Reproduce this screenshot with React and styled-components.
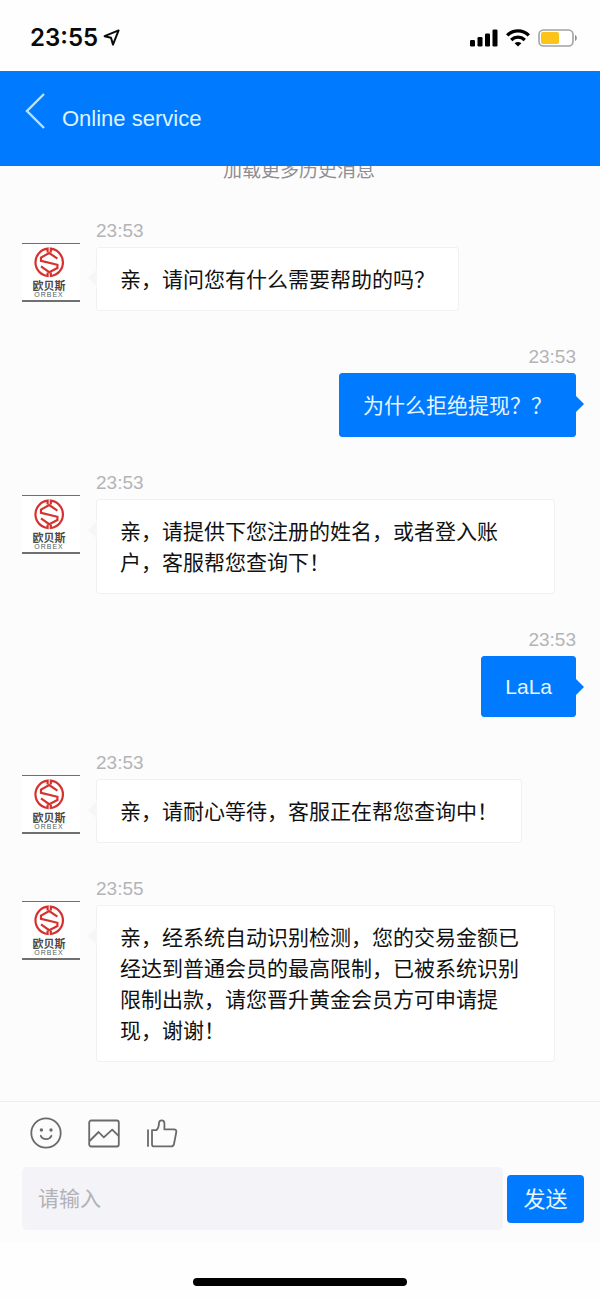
import React, { useState } from "react";
import styled, { createGlobalStyle } from "styled-components";

const GlobalStyle = createGlobalStyle`
  * {
    box-sizing: border-box;
  }
  body {
    margin: 0;
    background-color: #fefefe;
    font-family: "Liberation Sans", "Noto Sans CJK SC", sans-serif;
  }
`;

const Page = styled.div`
  display: flex;
  flex-direction: column;
  min-height: 100vh;
`;

const StatusBar = styled.div`
  display: flex;
  align-items: center;
  height: 71px;
  padding: 4px 22px 0 30px;
`;

const Clock = styled.span`
  font-family: Inter, "Liberation Sans", sans-serif;
  font-size: 24px;
  font-weight: 600;
  color: #0a0a0a;
  margin-right: 5px;
`;

const StatusIcons = styled.div`
  display: flex;
  align-items: center;
  gap: 8px;
  margin-left: auto;
`;

const Header = styled.header`
  display: flex;
  align-items: center;
  height: 95px;
  padding: 0 24px;
  gap: 16px;
  background-color: #007bff;
`;

const BackButton = styled.button`
  display: flex;
  padding: 0 0 16px;
  border: 0;
  background: none;
  cursor: pointer;
`;

const Title = styled.h1`
  margin: 0;
  font-size: 22px;
  font-weight: normal;
  line-height: 28px;
  color: #dff3ff;
`;

const Chat = styled.main`
  flex: 1;
  display: flex;
  flex-direction: column;
  gap: 34px;
  padding: 0 24px 39px 22px;
  overflow: hidden;
  background-color: #fcfcfd;
`;

// 往上滚动后只露出下半部分
const LoadMore = styled.button`
  align-self: center;
  margin: -7px 0 2px;
  padding: 0;
  border: 0;
  background: none;
  font-family: inherit;
  font-size: 19px;
  line-height: 24px;
  color: #8e8e93;
  cursor: pointer;
`;

const Row = styled.div`
  display: flex;
  align-items: flex-start;
  justify-content: ${(props) => (props.$mine ? "flex-end" : "flex-start")};
  gap: 16px;
  padding-right: ${(props) => (props.$mine ? "0" : "21px")};
`;

const Avatar = styled.div`
  flex: none;
  width: 58px;
  height: 59px;
  margin-top: 24px;
  border-top: 1px solid #707070;
  border-bottom: 2px solid #707070;
  background-color: #ffffff;
`;

const Body = styled.div`
  display: flex;
  flex-direction: column;
  align-items: ${(props) => (props.$mine ? "flex-end" : "flex-start")};
  gap: 4px;
  min-width: 0;
`;

const Time = styled.time`
  font-size: 19px;
  line-height: 24px;
  color: #b4b4b6;
`;

const Bubble = styled.div`
  position: relative;
  padding: 16px 23px 15px;
  border: 1px solid ${(props) => (props.$mine ? "#007bff" : "#f1f1f3")};
  border-radius: 3px;
  background-color: ${(props) => (props.$mine ? "#007bff" : "#ffffff")};
  color: ${(props) => (props.$mine ? "#e6f5ff" : "#111111")};
  font-size: 21px;
  line-height: ${(props) => (props.$latin ? "28px" : "31px")};

  &::after {
    content: "";
    position: absolute;
    top: 21px;
    border: 9px solid transparent;
    ${(props) =>
      props.$mine
        ? "left: 100%; border-left-color: #007bff; border-right: 0;"
        : "right: 100%; border-right-color: #f6f6f8; border-left: 0;"}
  }
`;

const Footer = styled.footer`
  padding: 15px 16px 13px 22px;
  border-top: 1px solid #ededef;
  background-color: #fcfcfd;
`;

const Tools = styled.div`
  display: flex;
  gap: 26px;
  padding: 0 8px;
  margin-bottom: 18px;
`;

const ToolButton = styled.button`
  display: flex;
  padding: 0;
  border: 0;
  background: none;
  cursor: pointer;
`;

const SendForm = styled.form`
  display: flex;
  align-items: center;
  gap: 4px;
`;

const TextInput = styled.input`
  flex: 1;
  min-width: 0;
  height: 63px;
  padding: 0 16px;
  border: 0;
  border-radius: 5px;
  background-color: #f3f3f8;
  font-family: inherit;
  font-size: 21px;
  color: #111111;
  outline: none;
  &::placeholder {
    color: #b2b2b6;
    opacity: 1;
  }
`;

const SendButton = styled.button`
  width: 77px;
  height: 48px;
  padding: 0 0 4px;
  border: 0;
  border-radius: 4px;
  background-color: #007bff;
  color: #e6f5ff;
  font-family: inherit;
  font-size: 22px;
  cursor: pointer;
`;

const HomeArea = styled.div`
  display: flex;
  justify-content: center;
  align-items: flex-end;
  height: 57px;
  padding-bottom: 14px;
`;

const HomeBar = styled.div`
  width: 214px;
  height: 8px;
  border-radius: 4px;
  background-color: #000000;
`;

const LocationIcon = () => (
  <svg width="18" height="18" viewBox="0 0 18 18" fill="none" stroke="#0a0a0a" strokeWidth="2" strokeLinejoin="round">
    <path d="M15.6 1.4 L1.6 7.2 L8 8.8 L10 15.6 Z" />
  </svg>
);

const SignalIcon = () => (
  <svg width="28" height="18" viewBox="0 0 28 18">
    <rect x="0" y="11" width="5" height="6.5" rx="1.3" />
    <rect x="7.5" y="8" width="5" height="9.5" rx="1.3" />
    <rect x="15" y="4.5" width="5" height="13" rx="1.3" />
    <rect x="22.5" y="0.5" width="5" height="17" rx="1.3" />
  </svg>
);

const WifiIcon = () => (
  <svg width="24" height="18" viewBox="0 0 24 18" fill="none" stroke="#000000" strokeWidth="3.4">
    <path d="M1.2 6.4 C7.4 0.4 16.6 0.4 22.8 6.4" />
    <path d="M5.2 10.9 C9.2 7.2 14.8 7.2 18.8 10.9" />
    <path d="M12 17.6 L8.6 14.2 C10.6 12.5 13.4 12.5 15.4 14.2 Z" fill="#000000" stroke="none" />
  </svg>
);

const BatteryIcon = () => (
  <svg width="40" height="18" viewBox="0 0 40 18">
    <rect x="1" y="1" width="34" height="16" rx="4.5" fill="#ffffff" stroke="#a2a2a4" strokeWidth="1.6" />
    <rect x="3" y="3" width="18" height="12" rx="2" fill="#fcc419" />
    <path d="M37 6 C39.4 7 39.4 11 37 12 Z" fill="#8f8f91" />
  </svg>
);

const BackIcon = () => (
  <svg width="22" height="38" viewBox="0 0 22 38" fill="none" stroke="#b9e2ff" strokeWidth="2.4">
    <path d="M20 2 L3 19 L20 36" />
  </svg>
);

const SmileIcon = () => (
  <svg width="32" height="32" viewBox="0 0 32 32" fill="none" stroke="#6a6a6a" strokeWidth="1.8" strokeLinecap="round">
    <circle cx="16" cy="16" r="14.7" />
    <circle cx="11.4" cy="13" r="0.8" fill="#6a6a6a" />
    <circle cx="21" cy="13" r="0.8" fill="#6a6a6a" />
    <path d="M10.8 18.8 C12.8 23.2 19.4 23.2 21.4 18.8" />
  </svg>
);

const PictureIcon = () => (
  <svg width="32" height="32" viewBox="0 0 32 32" fill="none" stroke="#6a6a6a" strokeWidth="1.8" strokeLinejoin="round">
    <rect x="1.2" y="3.5" width="29.6" height="26" rx="2" />
    <path d="M1.6 24 L10.6 15 L15.8 20.4 L24.2 12.6 L30.6 18.8" />
  </svg>
);

const LikeIcon = () => (
  <svg width="32" height="32" viewBox="0 0 32 32" fill="none" stroke="#6a6a6a" strokeWidth="1.8" strokeLinejoin="round" strokeLinecap="round">
    <path d="M2 13.2 V29" />
    <path d="M6 13.2 H10.5 C12.6 11 13 8.6 13 6 C13 2.4 18.4 2.4 18.4 6.2 V12.4 H28 C29.8 12.4 30.6 13.4 30.3 15 L28 27 C27.7 28.6 26.8 29.4 25.2 29.4 H8 C6.8 29.4 6 28.8 6 27.6 Z" />
  </svg>
);

const Logo = () => (
  <svg width="58" height="56" viewBox="0 0 58 56" role="img" aria-label="欧贝斯 ORBEX">
    <g fill="none" stroke="#d5322f" strokeWidth="2.2">
      <path d="M25.6 8.4 V4.6 A13.8 13.8 0 0 0 25.6 32 V28.6" />
      <path d="M28.8 8.4 V4.6 A13.8 13.8 0 0 1 28.8 32 V28.6" />
      <path d="M35.4 14.6 L27.2 9 L19 13.6 V16.8 L35.4 20.8 V24 L27.2 28.2 L19 22.4" />
    </g>
    <text x="27" y="46" textAnchor="middle" fontSize="11" fontWeight="bold" fill="#4a4a4a">
      欧贝斯
    </text>
    <text x="27" y="53" textAnchor="middle" fontSize="7" letterSpacing="1" fill="#5a5a5a">
      ORBEX
    </text>
  </svg>
);

const messages = [
  { id: 1, time: "23:53", text: "亲，请问您有什么需要帮助的吗？" },
  { id: 2, time: "23:53", text: "为什么拒绝提现？？", mine: true },
  { id: 3, time: "23:53", text: "亲，请提供下您注册的姓名，或者登入账户，客服帮您查询下！" },
  { id: 4, time: "23:53", text: "LaLa", mine: true, latin: true },
  { id: 5, time: "23:53", text: "亲，请耐心等待，客服正在帮您查询中！" },
  {
    id: 6,
    time: "23:55",
    text: "亲，经系统自动识别检测，您的交易金额已经达到普通会员的最高限制，已被系统识别限制出款，请您晋升黄金会员方可申请提现，谢谢！",
  },
];

const Message = ({ time, text, mine, latin }) => (
  <Row $mine={mine}>
    {!mine && (
      <Avatar>
        <Logo />
      </Avatar>
    )}
    <Body $mine={mine}>
      <Time>{time}</Time>
      <Bubble $mine={mine} $latin={latin}>
        {text}
      </Bubble>
    </Body>
  </Row>
);

const App = () => {
  const [value, setValue] = useState("");

  return (
    <>
      <GlobalStyle />
      <Page lang="zh-CN">
        <StatusBar>
          <Clock>23:55</Clock>
          <LocationIcon />
          <StatusIcons>
            <SignalIcon />
            <WifiIcon />
            <BatteryIcon />
          </StatusIcons>
        </StatusBar>
        <Header>
          <BackButton type="button" aria-label="返回">
            <BackIcon />
          </BackButton>
          <Title>Online service</Title>
        </Header>
        <Chat>
          <LoadMore type="button">加载更多历史消息</LoadMore>
          {messages.map((message) => (
            <Message key={message.id} {...message} />
          ))}
        </Chat>
        <Footer>
          <Tools>
            <ToolButton type="button" aria-label="表情">
              <SmileIcon />
            </ToolButton>
            <ToolButton type="button" aria-label="图片">
              <PictureIcon />
            </ToolButton>
            <ToolButton type="button" aria-label="评价">
              <LikeIcon />
            </ToolButton>
          </Tools>
          <SendForm onSubmit={(e) => e.preventDefault()}>
            <TextInput
              aria-label="消息"
              placeholder="请输入"
              value={value}
              onChange={(e) => setValue(e.target.value)}
            />
            <SendButton type="submit">发送</SendButton>
          </SendForm>
        </Footer>
        <HomeArea>
          <HomeBar />
        </HomeArea>
      </Page>
    </>
  );
};

export default App;
